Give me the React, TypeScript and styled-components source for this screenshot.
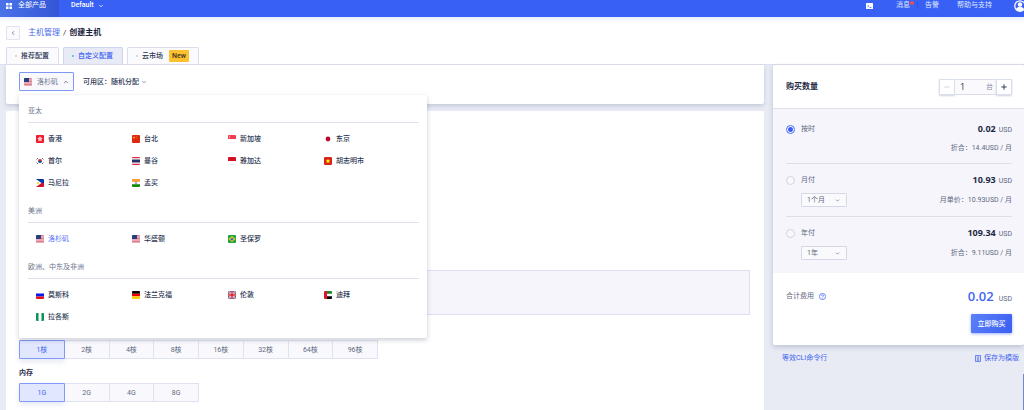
import React, { useState } from "react";
import styled, { createGlobalStyle, css } from "styled-components";
import { ChevronDown, ChevronLeft, ChevronUp, Minus, Plus } from "lucide-react";

const GlobalStyle = createGlobalStyle`
  *, *::before, *::after { box-sizing: border-box; }
  body {
    margin: 0;
    background: #e8ebf4;
    color: #2b3653;
    font: 400 7px/12px Roboto, "Noto Sans CJK SC", sans-serif;
    overflow: hidden;
  }
  button, input, select { font: inherit; color: inherit; margin: 0; padding: 0; }
  button { cursor: pointer; white-space: nowrap; }
  a { text-decoration: none; color: inherit; }
  h1, h2, h3 { margin: 0; font: inherit; }
  svg { display: block; flex: none; }
`;

const Page = styled.div`
  min-height: 100vh;
  display: flex;
  flex-direction: column;
`;

/* ---------- Top bar ---------- */
const TopBar = styled.header`
  height: 17px;
  display: flex;
  background: #3860f5;
  color: #fff;
  line-height: 11px;
  overflow: hidden;
`;

const Products = styled.a`
  width: 59px;
  padding-left: 6px;
  display: flex;
  gap: 6px;
  background: linear-gradient(90deg, #4a72e8, #3456d6);
  svg { margin-top: 3px; }
`;

const ProjectButton = styled.button`
  border: 0;
  background: none;
  height: 11px;
  margin-left: 12px;
  display: flex;
  align-items: center;
  gap: 4px;
  font-weight: 500;
`;

const TopLinks = styled.nav`
  margin-left: auto;
  margin-right: -2px;
  height: 11px;
  display: flex;
  align-items: center;
  white-space: nowrap;
`;

const TopLink = styled.a<{ $gap: number }>`
  margin-left: ${(p) => p.$gap}px;
  color: #dfe6ff;
`;

const Unread = styled.i`
  align-self: flex-start;
  width: 4px;
  height: 4px;
  margin-top: 1px;
  margin-right: -3px;
  border-radius: 50%;
  background: #e8505b;
`;

const TopSeparator = styled.i`
  width: 1px;
  height: 7px;
  margin-left: 6px;
  background: #2c51dd;
`;

/* ---------- Page header ---------- */
const PageHead = styled.div`
  padding: 9px 6px 0;
  background: linear-gradient(#e9edfd, #fff 5px);
  border-bottom: 1px solid #dddfeb;
`;

const Crumbs = styled.nav`
  display: flex;
  align-items: center;
  gap: 3px;
  font-size: 8px;
  line-height: 14px;
  a { color: #4a68ee; }
  h1 { font-weight: 700; color: #1c2540; }
`;

const BackButton = styled.button`
  width: 14px;
  height: 14px;
  margin-right: 5px;
  display: grid;
  place-items: center;
  border: 1px solid #e1e4ef;
  border-radius: 1px;
  background: #fbfbfe;
  color: #5b6580;
`;

const Tabs = styled.div`
  margin-top: 7px;
  display: flex;
  gap: 4px;
`;

const Tab = styled.button<{ $active?: boolean }>`
  height: 17px;
  padding: 0 9px 0 8px;
  display: flex;
  align-items: center;
  gap: 4px;
  border: 1px solid #d9ddec;
  border-bottom: 0;
  border-radius: 2px 2px 0 0;
  background: #fbfbfe;
  font-weight: 500;
  &::before {
    content: "";
    width: 2px;
    height: 2px;
    border-radius: 50%;
    background: #c5cbdb;
  }
  ${(p) =>
    p.$active &&
    css`
      background: #e8ebf5;
      border-color: #cdd5f1;
      color: #3f62f2;
      &::before { background: #35bdf0; }
    `}
`;

const NewBadge = styled.span`
  margin-left: 2px;
  padding: 0 3px;
  border-radius: 1px;
  background: #fdc02f;
  color: #3d3420;
`;

/* ---------- Body ---------- */
const Body = styled.div`
  flex: 1;
  display: flex;
  gap: 9px;
  padding-left: 6px;
`;

const Main = styled.main`
  flex: 1;
  min-width: 0;
  display: flex;
  flex-direction: column;
  gap: 7px;
`;

const RegionCard = styled.section`
  position: relative;
  z-index: 1;
  padding: 7px 13px 13px;
  display: flex;
  align-items: center;
  gap: 9px;
  background: #fff;
  border-radius: 0 0 2px 2px;
  box-shadow: 0 2px 4px rgba(60, 72, 110, 0.2);
`;

const RegionButton = styled.button`
  height: 19px;
  width: 55px;
  padding: 0 5px 0 4px;
  display: flex;
  align-items: center;
  gap: 5px;
  border: 1px solid #7f97f6;
  border-radius: 1px;
  background: #f8f8fd;
  color: #6d7690;
  svg:last-child { margin-left: auto; color: #4c5672; }
`;

const ZoneButton = styled.button`
  border: 0;
  background: none;
  display: flex;
  align-items: center;
  gap: 2px;
  font-weight: 500;
`;

const RegionMenu = styled.div`
  position: absolute;
  top: 30px;
  left: 13px;
  width: 408px;
  padding: 10px 8px 10px 9px;
  display: flex;
  flex-direction: column;
  gap: 11px;
  background: #fff;
  border-radius: 0 0 2px 2px;
  box-shadow: 0 2px 5px rgba(50, 60, 95, 0.25);
`;

const GroupTitle = styled.h3`
  padding-bottom: 5px;
  border-bottom: 1px solid #dfe2ee;
  color: #6a738c;
`;

const GroupGrid = styled.div`
  padding: 5px 0 0 8px;
  display: grid;
  grid-template-columns: repeat(4, 96px);
  grid-auto-rows: 22px;
`;

const RegionItem = styled.button<{ $active?: boolean }>`
  border: 0;
  background: none;
  display: flex;
  align-items: center;
  gap: 4px;
  font-weight: 500;
  ${(p) => p.$active && css`color: #5a74f3; font-weight: 400;`}
`;

const SpecCard = styled.section`
  flex: 1;
  padding: 159px 14px 8px 13px;
  background: #fff;
  border-radius: 2px 2px 0 0;
`;

const Notice = styled.div`
  height: 45px;
  margin-bottom: 25px;
  border: 1px solid #dcdff0;
  background: #f5f5fb;
`;

const Choices = styled.div<{ $width: number }>`
  width: ${(p) => p.$width}px;
  display: flex;
`;

const Choice = styled.button<{ $active?: boolean }>`
  flex: 1;
  height: 19px;
  border: 1px solid #dfe2f0;
  border-left-width: 0;
  background: #f9f9fd;
  color: #616a80;
  &:first-child { border-left-width: 1px; border-radius: 1px 0 0 1px; }
  &:last-child { border-radius: 0 1px 1px 0; }
  ${(p) =>
    p.$active &&
    css`
      border: 1px solid #8199f7;
      background: #e1e7fe;
      color: #4767f2;
      box-shadow: 0 3px 5px rgba(60, 80, 150, 0.12);
    `}
`;

const SpecTitle = styled.h2`
  margin: 8px 0 4px;
  font-weight: 700;
  color: #1f2946;
`;

/* ---------- Sidebar ---------- */
const Side = styled.aside`
  width: 251px;
`;

const Summary = styled.form`
  background: #fff;
  border-radius: 2px;
  overflow: hidden;
  box-shadow: 0 2px 5px rgba(60, 72, 110, 0.25);
`;

const QuantityRow = styled.div`
  height: 44px;
  padding: 0 12px 0 13px;
  display: flex;
  align-items: center;
  justify-content: space-between;
  border-bottom: 1px solid #dde1ec;
  h2 { font-size: 8px; font-weight: 700; color: #1f2946; }
`;

const Stepper = styled.div`
  display: flex;
  height: 16px;
`;

const StepButton = styled.button`
  width: 16px;
  display: grid;
  place-items: center;
  border: 1px solid #d9ddec;
  border-radius: 1px;
  background: #fff;
  color: #39435f;
  box-shadow: 0 1px 2px rgba(70, 85, 140, 0.25);
  &:disabled { color: #d3d7e3; }
`;

const StepField = styled.label`
  width: 41px;
  padding: 0 3px 0 5px;
  display: flex;
  align-items: center;
  border: solid #d9ddec;
  border-width: 1px 0;
  background: #fafafd;
  color: #8790a6;
  input {
    min-width: 0;
    flex: 1;
    border: 0;
    outline: 0;
    background: none;
    color: #2b3653;
    font: 400 9px/12px "Open Sans", sans-serif;
  }
`;

const Plans = styled.div`
  padding: 4px 12px 4px 13px;
  background: #f5f5fb;
`;

const Plan = styled.div`
  padding: 10px 0 9px;
  display: flex;
  flex-direction: column;
  gap: 7px;
  color: #5f6880;
  & + & { border-top: 1px solid #dcdfe9; }
`;

const PlanLine = styled.div`
  display: flex;
  align-items: center;
`;

const PlanLabel = styled.label`
  display: flex;
  align-items: center;
  gap: 6px;
`;

const Radio = styled.input`
  appearance: none;
  width: 9px;
  height: 9px;
  border: 1px solid #cfd3e0;
  border-radius: 50%;
  background: #f9f9fd;
  &:checked {
    border-color: #4a6bf5;
    background: radial-gradient(circle, #3860f5 2px, #fff 3px);
  }
`;

const Price = styled.span`
  margin-left: auto;
  height: 12px;
  display: flex;
  align-items: baseline;
  gap: 3px;
  strong {
    font-family: "Open Sans", sans-serif;
    font-size: 9px;
    font-weight: 700;
    color: #1f2946;
  }
`;

const PlanNote = styled.span`
  margin-left: auto;
`;

const SelectBox = styled.span`
  width: 46px;
  height: 14px;
  margin-left: 15px;
  display: grid;
  align-items: center;
  border: 1px solid #d5d9e6;
  border-radius: 1px;
  background: #fafafd;
  select, svg { grid-area: 1 / 1; }
  svg { justify-self: end; margin-right: 6px; pointer-events: none; }
  select {
    appearance: none;
    height: 12px;
    padding: 0 5px;
    border: 0;
    outline: 0;
    background: none;
  }
`;

const Total = styled.div`
  padding: 14px 12px 12px 13px;
  display: flex;
  flex-direction: column;
  align-items: flex-end;
  gap: 9px;
`;

const TotalLine = styled.div`
  align-self: stretch;
  height: 18px;
  display: flex;
  align-items: center;
  gap: 5px;
  color: #5f6880;
`;

const TotalPrice = styled.span`
  margin-left: auto;
  height: 18px;
  display: flex;
  align-items: baseline;
  gap: 5px;
  strong {
    font-family: "Open Sans", sans-serif;
    font-size: 13px;
    line-height: 18px;
    font-weight: 600;
    color: #4266f4;
  }
`;

const BuyButton = styled.button`
  width: 41px;
  height: 19px;
  border: 0;
  border-radius: 1px;
  background: linear-gradient(120deg, #5c80f8, #3a5ff2);
  color: #fff;
  font-weight: 500;
  box-shadow: 0 1px 3px rgba(56, 96, 245, 0.5);
`;

const SideLinks = styled.div`
  padding: 7px 5px 0 9px;
  display: flex;
  justify-content: space-between;
  color: #4464ef;
  a { display: flex; align-items: center; gap: 3px; }
`;

const PageScroll = styled.div`
  position: fixed;
  right: 0;
  bottom: 0;
  width: 1px;
  height: 36px;
  background: #6f8bc4;
`;

/* ---------- Flags ---------- */
const FlagSvg = styled.svg`
  border-radius: 1px;
`;

const usa = (
  <>
    <path fill="#f4d5da" d="M0 0h16v16H0z" />
    <path stroke="#d9677b" strokeWidth="1.6" d="M0 1h16M0 4h16M0 7h16M0 10h16M0 13h16M0 16h16" />
    <path fill="#24407e" d="M0 0h10v8H0z" />
  </>
);

const flagArt: Record<string, React.ReactNode> = {
  hk: (
    <>
      <path fill="#f01d2d" d="M0 0h16v16H0z" />
      <g fill="#fff" opacity=".9">
        {[0, 72, 144, 216, 288].map((a) => (
          <ellipse key={a} cx="8" cy="5.3" rx="1.5" ry="2.3" transform={`rotate(${a} 8 8)`} />
        ))}
      </g>
    </>
  ),
  cn: (
    <>
      <path fill="#de2910" d="M0 0h16v16H0z" />
      <path fill="#f5b21b" d="M4 2l.8 2h2L5.200 5.300l.6 2L4 6.100 2.200 7.300l.6-2L1.200 4h2z" />
      <circle cx="9" cy="2.500" r=".8" fill="#f5b21b" />
      <circle cx="9.500" cy="6" r=".8" fill="#f5b21b" />
    </>
  ),
  sg: (
    <>
      <path fill="#fff" d="M0 0h16v16H0z" />
      <path fill="#f23b4e" d="M0 0h16v8H0z" />
      <circle cx="4" cy="4" r="2.300" fill="#fbb6bd" />
      <circle cx="5.200" cy="4" r="2" fill="#f23b4e" />
      <path fill="#e6e8f0" d="M0 15h16v1H0z" />
    </>
  ),
  jp: (
    <>
      <path fill="#fff" d="M0 0h16v16H0z" />
      <circle cx="8" cy="8" r="4.800" fill="#bf0a30" />
      <path fill="#e6e8f0" d="M0 15h16v1H0z" />
    </>
  ),
  kr: (
    <>
      <path fill="#fff" d="M0 0h16v16H0z" />
      <path fill="#cd2e3a" d="M4 8a4 4 0 018 0z" />
      <path fill="#1b4b9c" d="M4 8a4 4 0 008 0z" />
      <path stroke="#333" strokeWidth="1.500" d="M1 5l3-3M12 2l3 3M1 11l3 3M12 14l3-3" />
    </>
  ),
  th: (
    <>
      <path fill="#fff" d="M0 0h16v16H0z" />
      <path fill="#dc2b3c" d="M0 0h16v2.500H0zM0 13.500h16V16H0z" />
      <path fill="#27306b" d="M0 5h16v6H0z" />
    </>
  ),
  id: (
    <>
      <path fill="#fff" d="M0 0h16v16H0z" />
      <path fill="#d50f25" d="M0 0h16v8H0z" />
      <path fill="#e6e8f0" d="M0 15h16v1H0z" />
    </>
  ),
  vn: (
    <>
      <path fill="#da251d" d="M0 0h16v16H0z" />
      <path fill="#ff0" d="M8 3.500l1.300 3.200 3.300.2-2.600 2.100.9 3.300L8 10.500l-2.900 1.800.9-3.300-2.600-2.100 3.300-.2z" />
    </>
  ),
  ph: (
    <>
      <path fill="#0038a8" d="M0 0h16v8H0z" />
      <path fill="#ce1126" d="M0 8h16v8H0z" />
      <path fill="#fff" d="M0 0l11 8-11 8z" />
      <circle cx="4" cy="8" r="2" fill="#f7c51e" />
    </>
  ),
  in: (
    <>
      <path fill="#fff" d="M0 0h16v16H0z" />
      <path fill="#f93" d="M0 0h16v5.300H0z" />
      <path fill="#128807" d="M0 10.700h16V16H0z" />
      <circle cx="8" cy="8" r="2" fill="none" stroke="#3d4aa3" />
    </>
  ),
  us: usa,
  br: (
    <>
      <path fill="#229e45" d="M0 0h16v16H0z" />
      <path fill="#f8e509" d="M8 2l7 6-7 6-7-6z" />
      <circle cx="8" cy="8" r="3.200" fill="#2b49a3" />
      <path stroke="#fff" strokeWidth=".8" fill="none" d="M5 7.500q3-.8 6 1.300" />
    </>
  ),
  ru: (
    <>
      <path fill="#fff" d="M0 0h16v16H0z" />
      <path fill="#0a17e6" d="M0 5h16v6H0z" />
      <path fill="#e3121c" d="M0 11h16v5H0z" />
    </>
  ),
  de: (
    <>
      <path d="M0 0h16v5.500H0z" />
      <path fill="#e00" d="M0 5.500h16v5.200H0z" />
      <path fill="#fc0" d="M0 10.700h16V16H0z" />
    </>
  ),
  gb: (
    <>
      <path fill="#1c2f7c" d="M0 0h16v16H0z" />
      <path stroke="#fff" strokeWidth="3" d="M0 0l16 16M16 0L0 16" />
      <path stroke="#d8202f" strokeWidth="1.200" d="M0 0l16 16M16 0L0 16" />
      <path stroke="#fff" strokeWidth="5" d="M8 0v16M0 8h16" />
      <path stroke="#d8202f" strokeWidth="3" d="M8 0v16M0 8h16" />
    </>
  ),
  ae: (
    <>
      <path fill="#fff" d="M0 0h16v16H0z" />
      <path fill="#128a28" d="M5 0h11v5.300H5z" />
      <path d="M5 10.700h11V16H5z" />
      <path fill="#e4112c" d="M0 0h6v16H0z" />
    </>
  ),
  ng: (
    <>
      <path fill="#fff" d="M0 0h16v16H0z" />
      <path fill="#0b9257" d="M0 0h5v16H0zM11 0h5v16h-5z" />
    </>
  ),
};

const Flag = ({ code }: { code: string }) => (
  <FlagSvg width="8" height="8" viewBox="0 0 16 16" aria-hidden="true">
    {flagArt[code]}
  </FlagSvg>
);

/* ---------- Data ---------- */
const regionGroups = [
  {
    title: "亚太",
    items: [
      ["hk", "香港"], ["cn", "台北"], ["sg", "新加坡"], ["jp", "东京"],
      ["kr", "首尔"], ["th", "曼谷"], ["id", "雅加达"], ["vn", "胡志明市"],
      ["ph", "马尼拉"], ["in", "孟买"],
    ],
  },
  { title: "美洲", items: [["us", "洛杉矶"], ["us", "华盛顿"], ["br", "圣保罗"]] },
  {
    title: "欧洲、中东及非洲",
    items: [["ru", "莫斯科"], ["de", "法兰克福"], ["gb", "伦敦"], ["ae", "迪拜"], ["ng", "拉各斯"]],
  },
];

const cores = ["1核", "2核", "4核", "8核", "16核", "32核", "64核", "96核"];
const memory = ["1G", "2G", "4G", "8G"];

const plans = [
  { id: "hour", label: "按时", price: "0.02", note: "折合：14.4USD / 月" },
  { id: "month", label: "月付", price: "10.93", note: "月单价：10.93USD / 月", term: "1个月" },
  { id: "year", label: "年付", price: "109.34", note: "折合：9.11USD / 月", term: "1年" },
];

export default function App() {
  const [region, setRegion] = useState("洛杉矶");
  const [core, setCore] = useState("1核");
  const [mem, setMem] = useState("1G");
  const [plan, setPlan] = useState("hour");
  const [count, setCount] = useState(1);

  return (
    <Page>
      <GlobalStyle />
      <TopBar>
        <Products href="#products">
          <svg width="6" height="6" viewBox="0 0 7 7" fill="#fff">
            <path d="M0 0h3v3H0zM4 0h3v3H4zM0 4h3v3H0zM4 4h3v3H4z" />
          </svg>
          全部产品
        </Products>
        <ProjectButton type="button">
          Default
          <ChevronDown size={6} strokeWidth={3} />
        </ProjectButton>
        <TopLinks>
          <svg width="7" height="6" viewBox="0 0 14 12">
            <rect width="14" height="12" rx="1" fill="#fff" />
            <path d="M3 3.500l2.500 2.500L3 8.500M7 9h4" fill="none" stroke="#3860f5" strokeWidth="1.500" />
          </svg>
          <TopLink href="#messages" $gap={23}>消息</TopLink>
          <Unread />
          <TopSeparator />
          <TopLink href="#alerts" $gap={7}>告警</TopLink>
          <TopLink href="#help" $gap={18}>帮助与支持</TopLink>
          <TopLink href="#account" aria-label="账户" $gap={22}>
            <svg width="12" height="12" viewBox="0 0 24 24">
              <circle cx="12" cy="12" r="10.500" fill="#3860f5" stroke="#fff" strokeWidth="2.500" />
              <circle cx="12" cy="9" r="4.500" fill="#fff" />
              <path fill="#fff" d="M4 19c1-4 4-5.500 8-5.500s7 1.500 8 5.500c-4 4.500-12 4.500-16 0z" />
            </svg>
          </TopLink>
        </TopLinks>
      </TopBar>

      <PageHead>
        <Crumbs>
          <BackButton type="button" aria-label="返回"><ChevronLeft size={6} strokeWidth={3} /></BackButton>
          <a href="#hosts">主机管理</a>
          <span>/</span>
          <h1>创建主机</h1>
        </Crumbs>
        <Tabs role="tablist">
          <Tab role="tab">推荐配置</Tab>
          <Tab role="tab" $active aria-selected="true">自定义配置</Tab>
          <Tab role="tab">云市场<NewBadge>New</NewBadge></Tab>
        </Tabs>
      </PageHead>

      <Body>
        <Main>
          <RegionCard>
            <RegionButton type="button" aria-expanded="true">
              <Flag code="us" />
              {region}
              <ChevronUp size={6} strokeWidth={3} />
            </RegionButton>
            <ZoneButton type="button">
              可用区：随机分配
              <ChevronDown size={6} strokeWidth={2} />
            </ZoneButton>
            <RegionMenu>
              {regionGroups.map((g) => (
                <div key={g.title}>
                  <GroupTitle>{g.title}</GroupTitle>
                  <GroupGrid>
                    {g.items.map(([code, name]) => (
                      <RegionItem key={name} type="button" $active={name === region} onClick={() => setRegion(name)}>
                        <Flag code={code} />
                        {name}
                      </RegionItem>
                    ))}
                  </GroupGrid>
                </div>
              ))}
            </RegionMenu>
          </RegionCard>

          <SpecCard>
            <Notice />
            <Choices $width={359}>
              {cores.map((c) => (
                <Choice key={c} type="button" $active={c === core} onClick={() => setCore(c)}>{c}</Choice>
              ))}
            </Choices>
            <SpecTitle>内存</SpecTitle>
            <Choices $width={180}>
              {memory.map((m) => (
                <Choice key={m} type="button" $active={m === mem} onClick={() => setMem(m)}>{m}</Choice>
              ))}
            </Choices>
          </SpecCard>
        </Main>

        <Side>
          <Summary onSubmit={(e) => e.preventDefault()}>
            <QuantityRow>
              <h2>购买数量</h2>
              <Stepper>
                <StepButton type="button" aria-label="减少" disabled={count <= 1} onClick={() => setCount(count - 1)}>
                  <Minus size={8} strokeWidth={3} />
                </StepButton>
                <StepField>
                  <input
                    aria-label="购买数量"
                    value={count}
                    onChange={(e) => setCount(Math.max(1, Number(e.target.value) || 1))}
                  />
                  台
                </StepField>
                <StepButton type="button" aria-label="增加" onClick={() => setCount(count + 1)}>
                  <Plus size={8} strokeWidth={3} />
                </StepButton>
              </Stepper>
            </QuantityRow>
            <Plans>
              {plans.map((p) => (
                <Plan key={p.id}>
                  <PlanLine>
                    <PlanLabel>
                      <Radio type="radio" name="plan" checked={plan === p.id} onChange={() => setPlan(p.id)} />
                      {p.label}
                    </PlanLabel>
                    <Price><strong>{p.price}</strong> USD</Price>
                  </PlanLine>
                  <PlanLine>
                    {p.term && (
                      <SelectBox>
                        <select aria-label={p.label}>
                          <option>{p.term}</option>
                        </select>
                        <ChevronDown size={5} strokeWidth={3} />
                      </SelectBox>
                    )}
                    <PlanNote>{p.note}</PlanNote>
                  </PlanLine>
                </Plan>
              ))}
            </Plans>
            <Total>
              <TotalLine>
                合计费用
                <svg width="7" height="7" viewBox="0 0 14 14" fill="none" stroke="#4266f4" strokeWidth="1.500">
                  <circle cx="7" cy="7" r="6.200" />
                  <path d="M5 5.500C5 3 9 3 9 5.500 9 7 7 6.800 7 8.500M7 9.700v1.300" />
                </svg>
                <TotalPrice><strong>0.02</strong> USD</TotalPrice>
              </TotalLine>
              <BuyButton type="submit">立即购买</BuyButton>
            </Total>
          </Summary>
          <SideLinks>
            <a href="#cli">等效CLI命令行</a>
            <a href="#template">
              <svg width="6" height="7" viewBox="0 0 12 14" fill="none" stroke="#4464ef" strokeWidth="1.500">
                <path d="M1 1h10v12H1zM3.500 4h5M3.500 10.500h5M6 5v4M4 7l2 2 2-2" />
              </svg>
              保存为模版
            </a>
          </SideLinks>
        </Side>
      </Body>
      <PageScroll />
    </Page>
  );
}
